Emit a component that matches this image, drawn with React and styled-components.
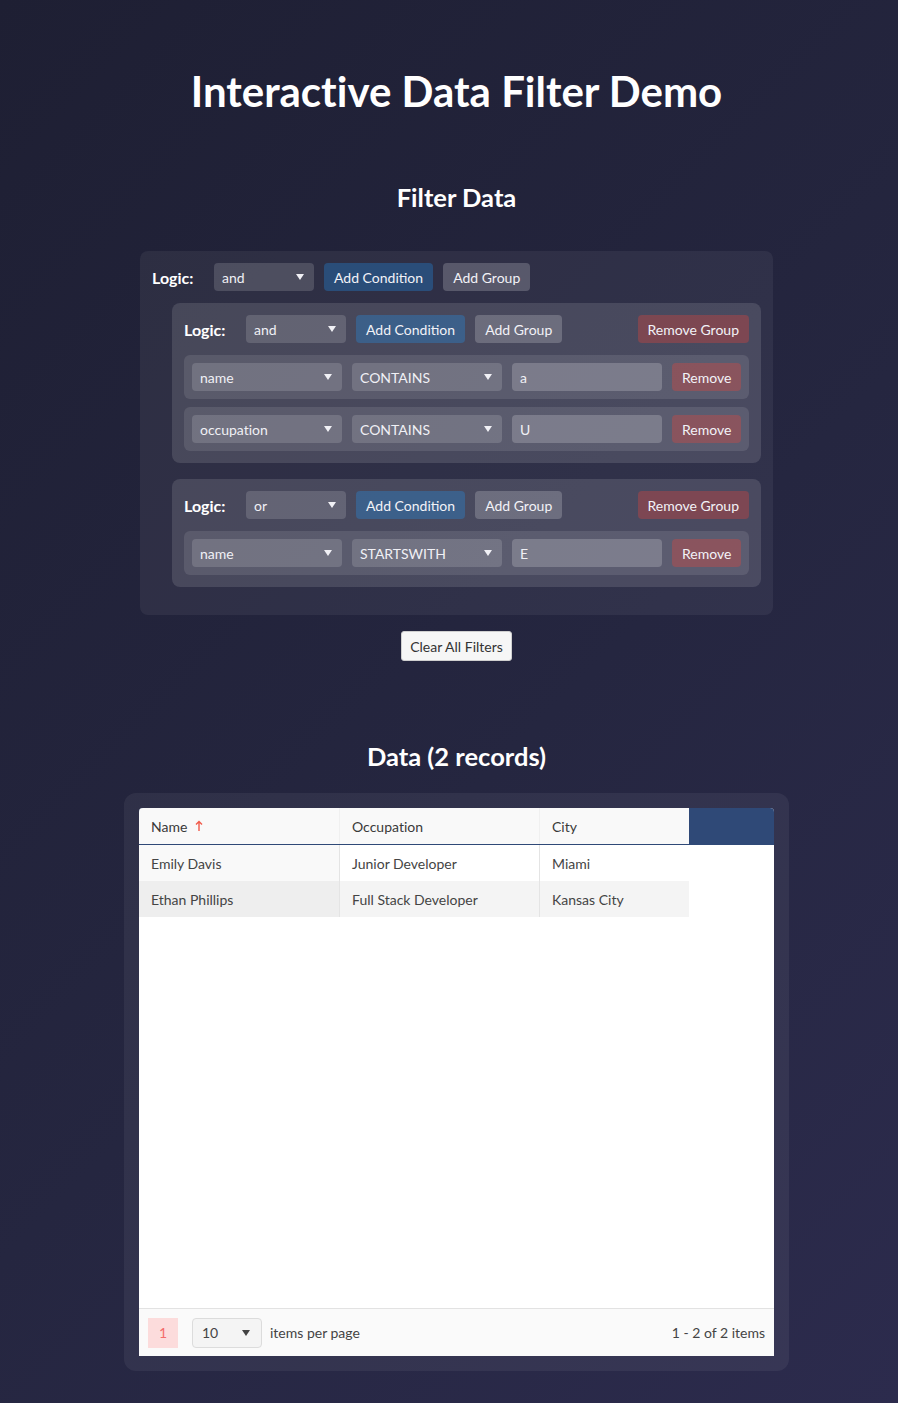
import React from "react";
import styled, { createGlobalStyle } from "styled-components";

const GlobalStyle = createGlobalStyle`
  html, body {
    margin: 0;
    padding: 0;
  }
  body {
    background: linear-gradient(135deg, #1e1f33 0%, #252640 55%, #2c2b4d 100%);
    min-height: 1403px;
    font-family: Lato, "Open Sans", "Liberation Sans", sans-serif;
    font-variant-ligatures: none;
    color: #fff;
  }
`;

const Page = styled.div`
  padding: 67px 0 32px 15px;
  display: flex;
  flex-direction: column;
  align-items: center;
`;

const Title = styled.h1`
  margin: 0 0 68px;
  font-size: 42px;
  line-height: 48px;
  font-weight: 700;
`;

const SectionTitle = styled.h2`
  margin: 0 0 ${p => p.$gap}px;
  font-size: 25.5px;
  line-height: 29px;
  font-weight: 700;
`;

const FilterPanel = styled.div`
  width: 633px;
  box-sizing: border-box;
  margin-top: 1px;
  padding: 12px;
  background: rgba(255, 255, 255, 0.06);
  border-radius: 8px;
`;

const Group = styled.div`
  margin: 12px 0 16px 20px;
  padding: 12px;
  background: rgba(255, 255, 255, 0.12);
  border-radius: 8px;
`;

const Toolbar = styled.div`
  display: flex;
  align-items: center;
  gap: 10px;
  height: 28px;
`;

const LogicLabel = styled.span`
  font-weight: 700;
  font-size: 16px;
  width: 52px;
`;

const SelectBox = styled.div`
  position: relative;
  flex-shrink: 0;
  width: ${p => p.$w}px;
  height: 28px;
  box-sizing: border-box;
  padding: 0 8px;
  display: flex;
  align-items: center;
  background: rgba(255, 255, 255, 0.15);
  border-radius: 4px;
  font-size: 14px;
  color: #f0f0f5;

  &::after {
    content: "";
    position: absolute;
    right: 10px;
    top: 11px;
    border-left: 4px solid transparent;
    border-right: 4px solid transparent;
    border-top: 6px solid #f0f0f5;
  }
`;

const TextBox = styled.div`
  flex-shrink: 0;
  width: 150px;
  height: 28px;
  box-sizing: border-box;
  padding: 0 8px;
  display: flex;
  align-items: center;
  background: rgba(255, 255, 255, 0.2);
  border-radius: 4px;
  font-size: 14px;
  color: #f0f0f5;
`;

const tones = {
  blue: "rgba(33, 150, 243, 0.3)",
  gray: "rgba(255, 255, 255, 0.2)",
  red: "rgba(244, 67, 54, 0.3)",
};

const Button = styled.button`
  flex-shrink: 0;
  height: 28px;
  padding: 0 10px;
  border: none;
  border-radius: 4px;
  background: ${p => tones[p.$tone]};
  color: #f2f2f7;
  font-family: inherit;
  font-size: 14px;
  margin-left: ${p => (p.$push ? "auto" : "0")};
  cursor: pointer;
`;

const ConditionRow = styled.div`
  display: flex;
  align-items: center;
  gap: 10px;
  margin-top: 12px;
  padding: 8px;
  background: rgba(255, 255, 255, 0.1);
  border-radius: 6px;

  & + & {
    margin-top: 8px;
  }
`;

const ClearButton = styled.button`
  margin: 16px 0 81px;
  height: 30px;
  padding: 0 8px;
  background: #f6f6f6;
  border: 1px solid #cfcfcf;
  border-radius: 3px;
  color: #333;
  font-family: inherit;
  font-size: 14px;
`;

const Card = styled.div`
  width: 665px;
  box-sizing: border-box;
  padding: 15px;
  background: rgba(255, 255, 255, 0.06);
  border-radius: 12px;
`;

const Grid = styled.div`
  height: 548px;
  display: flex;
  flex-direction: column;
  background: #fff;
  border-radius: 4px 4px 0 0;
  overflow: hidden;
  color: #444;
  font-size: 14px;
`;

const HeaderRow = styled.div`
  display: flex;
  height: 37px;
  background: #2f4977;
`;

const HeaderCell = styled.div`
  width: ${p => p.$w}px;
  height: 36px;
  box-sizing: border-box;
  padding: 0 12px;
  display: flex;
  align-items: center;
  gap: 8px;
  background: #f9f9f9;
  border-left: ${p => (p.$first ? "none" : "1px solid #f0f0f0")};
  color: #3a3a3a;
`;

const Body = styled.div`
  flex: 1;
`;

const Row = styled.div`
  display: flex;
  width: 550px;
  height: 36px;
  background: ${p => (p.$alt ? "#f4f4f4" : "#fff")};
`;

const Cell = styled.div`
  width: ${p => p.$w}px;
  box-sizing: border-box;
  padding: 0 12px;
  display: flex;
  align-items: center;
  border-left: ${p => (p.$first ? "none" : "1px solid #e4e4e4")};
  background: ${p => (p.$sorted ? "rgba(0, 0, 0, 0.025)" : "transparent")};
`;

const Pager = styled.div`
  height: 48px;
  box-sizing: border-box;
  display: flex;
  align-items: center;
  padding: 0 9px;
  background: #fafafa;
  border-top: 1px solid #e2e2e2;
  color: #444;
`;

const PageNumber = styled.div`
  width: 30px;
  height: 30px;
  display: flex;
  align-items: center;
  justify-content: center;
  background: #fcdcdc;
  color: #f46b6b;
`;

const SizeSelect = styled.div`
  position: relative;
  width: 70px;
  height: 30px;
  box-sizing: border-box;
  margin: 0 8px 0 14px;
  padding: 0 9px;
  display: flex;
  align-items: center;
  background: #f4f4f4;
  border: 1px solid #dcdcdc;
  border-radius: 4px;

  &::after {
    content: "";
    position: absolute;
    right: 11px;
    top: 11px;
    border-left: 4px solid transparent;
    border-right: 4px solid transparent;
    border-top: 6px solid #424242;
  }
`;

const PagerInfo = styled.span`
  margin-left: auto;
`;

const columns = [
  { key: "name", title: "Name", w: 200 },
  { key: "occupation", title: "Occupation", w: 200 },
  { key: "city", title: "City", w: 150 },
];

const rows = [
  { name: "Emily Davis", occupation: "Junior Developer", city: "Miami" },
  { name: "Ethan Phillips", occupation: "Full Stack Developer", city: "Kansas City" },
];

const groups = [
  {
    logic: "and",
    conditions: [
      { field: "name", op: "CONTAINS", value: "a" },
      { field: "occupation", op: "CONTAINS", value: "U" },
    ],
  },
  {
    logic: "or",
    conditions: [{ field: "name", op: "STARTSWITH", value: "E" }],
  },
];

function SortArrow() {
  return (
    <svg width="8" height="12" viewBox="0 0 8 12">
      <path d="M4 11V1.5M1 4.5L4 1.5L7 4.5" stroke="#f15a4a" strokeWidth="1.4" fill="none" />
    </svg>
  );
}

function FilterGroup({ group }) {
  return (
    <Group>
      <Toolbar>
        <LogicLabel>Logic:</LogicLabel>
        <SelectBox $w={100}>{group.logic}</SelectBox>
        <Button $tone="blue">Add Condition</Button>
        <Button $tone="gray">Add Group</Button>
        <Button $tone="red" $push>Remove Group</Button>
      </Toolbar>
      {group.conditions.map((c, i) => (
        <ConditionRow key={i}>
          <SelectBox $w={150}>{c.field}</SelectBox>
          <SelectBox $w={150}>{c.op}</SelectBox>
          <TextBox>{c.value}</TextBox>
          <Button $tone="red">Remove</Button>
        </ConditionRow>
      ))}
    </Group>
  );
}

export default function App() {
  return (
    <>
      <GlobalStyle />
      <Page>
        <Title>Interactive Data Filter Demo</Title>
        <SectionTitle $gap={38}>Filter Data</SectionTitle>
        <FilterPanel>
          <Toolbar>
            <LogicLabel>Logic:</LogicLabel>
            <SelectBox $w={100}>and</SelectBox>
            <Button $tone="blue">Add Condition</Button>
            <Button $tone="gray">Add Group</Button>
          </Toolbar>
          {groups.map((g, i) => (
            <FilterGroup key={i} group={g} />
          ))}
        </FilterPanel>
        <ClearButton>Clear All Filters</ClearButton>
        <SectionTitle $gap={22}>Data ({rows.length} records)</SectionTitle>
        <Card>
          <Grid>
            <HeaderRow>
              {columns.map((col, i) => (
                <HeaderCell key={col.key} $w={col.w} $first={i === 0}>
                  {col.title}
                  {i === 0 && <SortArrow />}
                </HeaderCell>
              ))}
            </HeaderRow>
            <Body>
              {rows.map((r, ri) => (
                <Row key={ri} $alt={ri % 2 === 1}>
                  {columns.map((col, i) => (
                    <Cell key={col.key} $w={col.w} $first={i === 0} $sorted={i === 0}>
                      {r[col.key]}
                    </Cell>
                  ))}
                </Row>
              ))}
            </Body>
            <Pager>
              <PageNumber>1</PageNumber>
              <SizeSelect>10</SizeSelect>
              items per page
              <PagerInfo>1 - 2 of 2 items</PagerInfo>
            </Pager>
          </Grid>
        </Card>
      </Page>
    </>
  );
}
